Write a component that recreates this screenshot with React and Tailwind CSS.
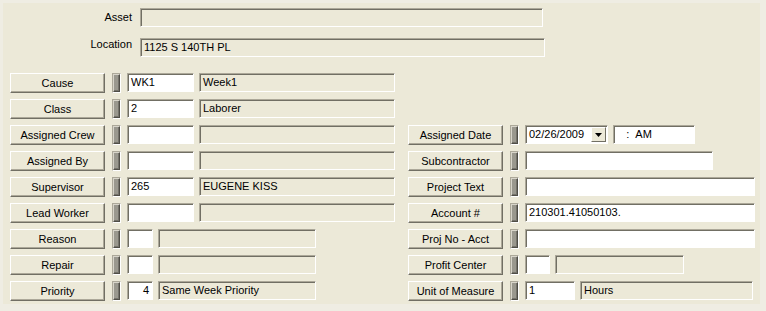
import React from 'react'

const font = { fontFamily: '"Liberation Sans", Arial, sans-serif' }

const sunken =
  'border border-t-[#ACA899] border-l-[#ACA899] border-b-white border-r-white shadow-[inset_1px_1px_0_#716F64]'

const Field = ({ w, value = '', white, right }) => (
  <div
    className={`${sunken} h-[19px] ${w} ${white ? 'bg-white' : 'bg-[#ECE9D8]'} flex items-center px-[3px] text-[11px] text-black leading-none overflow-hidden whitespace-nowrap ${right ? 'justify-end' : ''}`}
  >
    {value}
  </div>
)

const Btn = ({ label }) => (
  <div className="w-[95px] h-[20px] bg-[#ECE9D8] border border-t-white border-l-white border-b-[#716F64] border-r-[#716F64] shadow-[inset_-1px_-1px_0_#ACA899] flex items-center justify-center text-[11px] text-black leading-none">
    {label}
  </div>
)

const Grip = () => (
  <div className="w-[9px] h-[20px] border border-t-[#ACA899] border-l-[#ACA899] border-b-white border-r-white flex">
    <div className="flex-1 bg-[#9A988E] border border-t-[#D8D5CA] border-l-[#D8D5CA] border-b-[#4F4D46] border-r-[#4F4D46] shadow-[inset_-1px_-1px_0_#75736B]" />
  </div>
)

const Row = ({ label, children }) => (
  <div className="h-[26px] flex items-start">
    <Btn label={label} />
    <div className="ml-[7px]">
      <Grip />
    </div>
    <div className="ml-[6px] flex gap-[5px]">{children}</div>
  </div>
)

const App = () => {
  return (
    <div style={font} className="w-[766px] h-[311px] bg-[#EFEDE3] p-[3px]">
      <div className="w-[757px] h-[301px] bg-[#ECE9D8] pt-[5px]">
        {/* top info */}
        <div className="flex items-center h-[19px]">
          <div className="w-[130px] text-right text-[11px] pr-[1px]">Asset</div>
          <div className="ml-[7px]">
            <Field w="w-[403px]" />
          </div>
        </div>
        <div className="flex items-center h-[19px] mt-[11px]">
          <div className="w-[130px] text-right text-[11px] pr-[1px] -mt-[6px]">Location</div>
          <div className="ml-[7px]">
            <Field w="w-[405px]" value="1125 S 140TH PL" />
          </div>
        </div>

        {/* main rows */}
        <div className="flex mt-[16px] pl-[7px]">
          <div className="w-[398px]">
            <Row label="Cause">
              <Field w="w-[67px]" white value="WK1" />
              <Field w="w-[196px]" value="Week1" />
            </Row>
            <Row label="Class">
              <Field w="w-[67px]" white value="2" />
              <Field w="w-[196px]" value="Laborer" />
            </Row>
            <Row label="Assigned Crew">
              <Field w="w-[67px]" white />
              <Field w="w-[196px]" />
            </Row>
            <Row label="Assigned By">
              <Field w="w-[67px]" white />
              <Field w="w-[196px]" />
            </Row>
            <Row label="Supervisor">
              <Field w="w-[67px]" white value="265" />
              <Field w="w-[196px]" value="EUGENE KISS" />
            </Row>
            <Row label="Lead Worker">
              <Field w="w-[67px]" white />
              <Field w="w-[196px]" />
            </Row>
            <Row label="Reason">
              <Field w="w-[26px]" white />
              <Field w="w-[158px]" />
            </Row>
            <Row label="Repair">
              <Field w="w-[26px]" white />
              <Field w="w-[158px]" />
            </Row>
            <Row label="Priority">
              <Field w="w-[26px]" white right value="4" />
              <Field w="w-[158px]" value="Same Week Priority" />
            </Row>
          </div>

          <div className="pt-[52px]">
            <Row label="Assigned Date">
              <div className={`${sunken} h-[19px] w-[83px] bg-white flex items-center pl-[3px] pr-[1px] text-[11px] leading-none`}>
                <span className="flex-1">02/26/2009</span>
                <div className="w-[15px] h-[15px] bg-[#ECE9D8] border border-t-white border-l-white border-b-[#716F64] border-r-[#716F64] flex items-center justify-center">
                  <svg width="7" height="4" viewBox="0 0 7 4">
                    <path d="M0 0h7L3.5 4z" fill="#000" />
                  </svg>
                </div>
              </div>
              <Field w="w-[82px]" white value={'\u00a0\u00a0\u00a0:\u00a0\u00a0AM'} />
            </Row>
            <Row label="Subcontractor">
              <Field w="w-[188px]" white />
            </Row>
            <Row label="Project Text">
              <Field w="w-[230px]" white />
            </Row>
            <Row label="Account #">
              <Field w="w-[230px]" white value="210301.41050103." />
            </Row>
            <Row label="Proj No - Acct">
              <Field w="w-[230px]" white />
            </Row>
            <Row label="Profit Center">
              <Field w="w-[25px]" white />
              <Field w="w-[129px]" />
            </Row>
            <Row label="Unit of Measure">
              <Field w="w-[50px]" white value="1" />
              <Field w="w-[173px]" value="Hours" />
            </Row>
          </div>
        </div>
      </div>
    </div>
  )
}

export default App
